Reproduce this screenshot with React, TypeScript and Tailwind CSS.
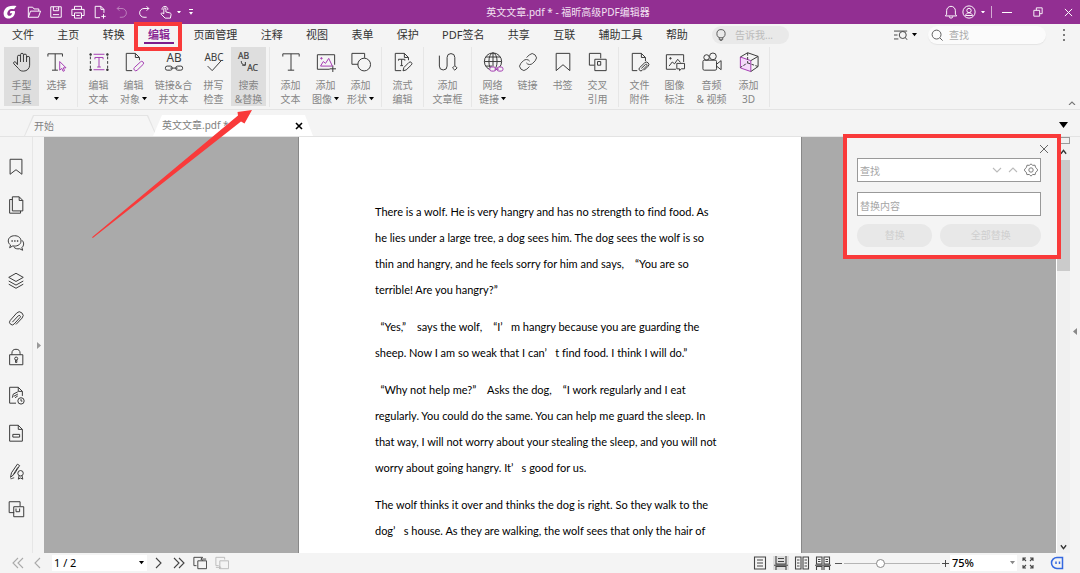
import { useState } from 'react';
import type { ReactNode } from 'react';

const menus = ['文件', '主页', '转换', '编辑', '页面管理', '注释', '视图', '表单', '保护', 'PDF签名', '共享', '互联', '辅助工具', '帮助'];

type IconProps = { children: ReactNode; className?: string; box?: string };

const Icon = ({ children, className = 'size-5', box = '0 0 22 22' }: IconProps) => (
    <svg
        viewBox={box}
        className={`${className} shrink-0`}
        fill="none"
        stroke="currentColor"
        strokeWidth="1.1"
        aria-hidden="true"
    >
        {children}
    </svg>
);

const purple = '#a63fb4';

const icons: Record<string, ReactNode> = {
    hand: (
        <path d="M6 14V5.200a1.700 1.700 0 0 1 3.400 0V11M9.400 5.200V3a1.600 1.600 0 0 1 3.200 0v8M12.600 4a1.700 1.700 0 0 1 3.400 0v7M16 6.500a1.700 1.700 0 0 1 3.400 0v8a6.500 6.500 0 0 1-6.500 6.500H12c-2.500 0-4-1.200-5-3l-5-5c-1-1.700.8-3 2.200-1.800L6 14" />
    ),
    select: (
        <>
            <path d="M1 5V2h16v3M9 2v18M5.500 20H12" />
            <path stroke={purple} d="M14 10.500V20l2.300-2 1.400 3.200 1.600-.7-1.400-3.100h3z" />
        </>
    ),
    editText: (
        <>
            <path strokeDasharray="3 2" d="M1.500 5v13M20.500 5v13" />
            <path stroke={purple} d="M5 2.500h12M5 19.500h12M6.500 8V6h9v2M11 6v10.500M9 16.500h4" />
            <path fill="currentColor" d="M1 2h1.500v1.500H1zM19.500 2H21v1.500h-1.500zM1 18.800h1.500v1.500H1zM19.500 18.800H21v1.500h-1.500z" />
        </>
    ),
    editObject: (
        <>
            <path d="M9 20.500H2.500v-19h10l4.500 4.500v3M12.500 1.500V6H17" />
            <path stroke={purple} d="m11.500 17 6.500-6a2 2 0 0 1 3 2.700l-6.500 6.300a2 2 0 0 1-3-3z" />
        </>
    ),
    linkText: (
        <>
            <text x="11" y="11.500" textAnchor="middle" fontSize="13" fill="currentColor" stroke="none">
                AB
            </text>
            <rect x="1.500" y="15.500" width="7.500" height="4.500" rx="2" />
            <rect x="13" y="15.500" width="7.500" height="4.500" rx="2" />
            <path d="M7 17.700h8" />
        </>
    ),
    spell: (
        <>
            <text x="11" y="10" textAnchor="middle" fontSize="11" fill="currentColor" stroke="none">
                ABC
            </text>
            <path d="m4 15.500 5 5L19 9.500" />
        </>
    ),
    replace: (
        <>
            <g fontSize="9.500" fill="currentColor" strokeWidth=".2">
                <text x="-1" y="7.500">AB</text>
                <text x="9" y="21">AC</text>
            </g>
            <path d="M2.500 10c0 2.800 1.500 4.500 4.500 4.500M7 11v3.500H3.500" />
        </>
    ),
    text: <path d="M2 5V2h18v3M11 2v18M7.500 20h7" />,
    image: (
        <>
            <path d="M15 19H1.500V3h19v11M18.500 15v7M15 18.500h7" />
            <path stroke={purple} d="m5 15.500 3-5 2.500 2L14 7l4 8.500z" />
            <circle cx="6" cy="7" r=".8" fill={purple} stroke={purple} />
        </>
    ),
    shape: (
        <>
            <path d="M8 13.500H1V1.500h14v5" />
            <circle cx="14.500" cy="13.800" r="7" />
        </>
    ),
    flow: (
        <>
            <path d="M9 20.500H2.500v-19h10L17 6v3M12.500 1.500V6H17M6 9.500V8h7v1.500M9.500 8v7M8 15h3" />
            <path d="m12 17 5.500-5.500a1.800 1.800 0 0 1 2.700 2.700l-5.700 5.500-3.500 1z" />
        </>
    ),
    article: <path d="M1.500 4v11.500a4.200 4.200 0 0 0 8.500 0V6a4.200 4.200 0 0 1 8.500 0v9M18.500 15l2.500 2.500-2.500 2.500-2.500-2.500z" />,
    web: (
        <>
            <circle cx="11" cy="10.500" r="9.500" />
            <ellipse cx="11" cy="10.500" rx="4.500" ry="9.500" />
            <path d="M11 1v15M1.500 10.500h19M3 5.500h16M3 15.500h7" />
            <g stroke={purple}>
                <rect x="7.500" y="16.500" width="6.500" height="4.500" rx="2" fill="#f4f4f4" />
                <rect x="15.500" y="16.500" width="6.500" height="4.500" rx="2" fill="#f4f4f4" />
                <path d="M12.500 18.800h5" />
            </g>
        </>
    ),
    link: (
        <g transform="scale(.92)">
            <path d="M10 13a5 5 0 0 0 7.540.540l3-3a5 5 0 0 0-7.070-7.070l-3.200 3.200" />
            <path d="M14 11a5 5 0 0 0-7.540-.540l-3 3a5 5 0 0 0 7.070 7.070l3.200-3.200" />
        </g>
    ),
    bookmark: <path d="M3.500 1.500h15v19L11 14l-7.500 6.500z" />,
    cross: (
        <>
            <path d="M7 14.500H1.500v-13H14V7" />
            <path d="M7.500 8h12.500v12.500H7.500zM10.500 10.500v4h3.500v-4z" />
        </>
    ),
    attach: (
        <>
            <path d="M8 20.500H2.500v-19h10L17 6v4M12.500 1.500V6H17" />
            <path d="m12.500 18 4.500-4.300a1 1 0 0 1 1.500 1.400l-5 5a2 2 0 0 1-3-2.800l5.500-5.300a2.600 2.600 0 0 1 4 3.600l-4.500 4.500" />
        </>
    ),
    imageNote: (
        <>
            <path d="M12 19H1.500V3h19v8M4.500 15.500 8 11l2.500 2L14 8l3 3.500" />
            <circle cx="6" cy="7" r=".8" fill="currentColor" />
            <path d="M13 12.500h8.500v6H18l-2 2v-2h-3z" />
        </>
    ),
    video: (
        <>
            <circle cx="5" cy="6" r="3" />
            <circle cx="12" cy="4.800" r="3.700" />
            <rect x="1" y="9" width="15" height="11" rx="1.500" />
            <path d="m16 13.500 5-4v10l-5-4" />
        </>
    ),
    cube: (
        <>
            <path fill="#f5d9fa" stroke={purple} d="M1.500 5.500 13 9.500v12L1.500 17.500z" />
            <path d="M1.500 5.500 9.500.8l11.500 4-8 4.700M21 4.800V16l-8 5.500" />
            <path strokeDasharray="3 1.500" d="M9.500 1v11L1.500 17M9.500 12 21 16" />
        </>
    ),
};

type Tool = { icon: string; label: string[]; caret?: boolean; active?: boolean; width?: string };

const groups: Tool[][] = [
    [
        { icon: 'hand', label: ['手型', '工具'], active: true },
        { icon: 'select', label: ['选择', ''], caret: true },
    ],
    [
        { icon: 'editText', label: ['编辑', '文本'] },
        { icon: 'editObject', label: ['编辑', '对象'], caret: true },
        { icon: 'linkText', label: ['链接&合', '并文本'], width: 'w-[45px]' },
        { icon: 'spell', label: ['拼写', '检查'] },
        { icon: 'replace', label: ['搜索', '&替换'], active: true },
    ],
    [
        { icon: 'text', label: ['添加', '文本'] },
        { icon: 'image', label: ['添加', '图像'], caret: true },
        { icon: 'shape', label: ['添加', '形状'], caret: true },
    ],
    [{ icon: 'flow', label: ['流式', '编辑'] }],
    [{ icon: 'article', label: ['添加', '文章框'], width: 'w-[41px]' }],
    [
        { icon: 'web', label: ['网络', '链接'], caret: true },
        { icon: 'link', label: ['链接'] },
        { icon: 'bookmark', label: ['书签'] },
        { icon: 'cross', label: ['交叉', '引用'] },
    ],
    [
        { icon: 'attach', label: ['文件', '附件'] },
        { icon: 'imageNote', label: ['图像', '标注'] },
        { icon: 'video', label: ['音频', '& 视频'], width: 'w-[39px]' },
        { icon: 'cube', label: ['添加', '3D'] },
    ],
];

const sideTools: { name: string; art: ReactNode }[] = [
    { name: '书签', art: <path d="M4.500 2.500h13v16.500l-6.500-5-6.500 5z" /> },
    {
        name: '页面',
        art: <path d="M7 2h7.500L18.500 6v11.500H7zM14.500 2v4h4M7 5H4v15h12v-2.500" />,
    },
    {
        name: '注释',
        art: (
            <>
                <path d="M9.500 3c-4.300 0-7 2.500-7 5.700 0 2 1 3.500 2.500 4.500l-1 3 3.500-2c3.500.8 9-.7 9-5.500 0-3.200-2.700-5.700-7-5.700z" />
                <path d="M17.500 8c2.500 2 2.500 6 0 8l.8 3-3.300-1.700c-2.500.5-5 0-6.500-2" />
                <path strokeDasharray="1.500 1.500" strokeWidth="1.500" d="M6 8.800h7.500" />
            </>
        ),
    },
    { name: '图层', art: <path d="m11 2.500 8 4.500-8 4.500L3 7zM3 11l8 4.500 8-4.500M3 14.500l8 4.500 8-4.500" /> },
    {
        name: '附件',
        art: <path d="m7 14.500 6.500-7a1.300 1.300 0 0 1 2 1.800l-6.500 7.200a2.900 2.900 0 0 1-4.300-4l7-8a4 4 0 0 1 6 5.500L11 17" />,
    },
    {
        name: '安全',
        art: (
            <>
                <path d="M4 8.500h14.500v11H4zM6.500 8.500V7a4.500 4.500 0 0 1 9 0v1.500" />
                <circle cx="11.200" cy="12.800" r="1.700" />
                <path d="M10.500 14.500h1.400v2.500h-1.400z" />
            </>
        ),
    },
    {
        name: '签名历史',
        art: (
            <>
                <path d="M11 20H4V2.500h9.500L18 7v5M13.500 2.500V7H18" />
                <path d="m7 14 1-4 5-2.500M8.500 12.500l4.500-2.500M10 14l3-2" />
                <circle cx="16.500" cy="17.500" r="3.500" />
                <path d="M16.500 15.500v2.200H18" />
            </>
        ),
    },
    { name: '字段', art: <path d="M4 2.500h9.500L18 7v13H4zM13.500 2.500V7H18M7.500 12.500h7.500v3H7.500z" /> },
    {
        name: '数字签名',
        art: (
            <>
                <path d="m5 18 1-5L12.500 3.500 15 5 9 14.500zM8 15l5-8M5 19.500c2 0 2.500-1 4-1" />
                <circle cx="16" cy="13.500" r="3" />
                <path d="m14.500 16-1 4 2.500-1.300 2.500 1.300-1-4" />
            </>
        ),
    },
    {
        name: '文章',
        art: <path d="M9 15H3.500V3h12v5M8.500 8.500h11v11h-11zM11 10.500v3.500h4v-3.500" />,
    },
];

const paragraphs = [
    [
        'There is a wolf. He is very hangry and has no strength to find food. As',
        'he lies under a large tree, a dog sees him. The dog sees the wolf is so',
        'thin and hangry, and he feels sorry for him and says,\u3000“You are so',
        'terrible! Are you hangry?”',
    ],
    [
        '\u2002“Yes,”\u3000says the wolf,\u3000“I’\u2003m hangry because you are guarding the',
        'sheep. Now I am so weak that I can’\u2003t find food. I think I will do.”',
    ],
    [
        '\u2002“Why not help me?”\u3000Asks the dog,\u3000“I work regularly and I eat',
        'regularly. You could do the same. You can help me guard the sleep. In',
        'that way, I will not worry about your stealing the sleep, and you will not',
        'worry about going hangry. It’\u2003s good for us.',
    ],
    [
        'The wolf thinks it over and thinks the dog is right. So they walk to the',
        'dog’\u2003s house. As they are walking, the wolf sees that only the hair of',
    ],
];

const Caret = ({ className = 'w-[5px]' }: { className?: string }) => (
    <svg viewBox="0 0 6 4" className={`${className} shrink-0`} fill="currentColor" aria-hidden="true">
        <path d="M0 0h6L3 4z" />
    </svg>
);

const TitleBar = () => (
    <header className="flex h-6 shrink-0 items-center justify-between bg-[#922f92] px-[3px] text-white">
        {/* Quick access */}
        <div className="flex flex-1 items-center gap-2">
            <svg viewBox="0 0 14 14" className="size-[14px]" fill="white" role="img" aria-label="Foxit">
                <path d="M13.500 1C8 .2 4.500 1.200 2.500 3.500-.5 7 .2 12 3.500 13.200c4 1.300 8-1.200 8.500-5.700.1-.9-.2-1.500-.8-1.500H7.500L6.800 8.200h2.400c-.6 2-2.200 3-3.700 2.500-1.700-.7-1.600-3.500 0-5.200 1.500-1.700 3.600-1.600 5.500-1.200z" />
            </svg>
            <div className="flex items-center gap-2 pl-[2px]">
                <button aria-label="打开">
                    <Icon className="size-[14px]" box="0 0 16 16">
                        <path d="M1.500 14V2.500h5l1.500 2h5.500V7M1.500 14 4 7h11.500L13 14z" />
                    </Icon>
                </button>
                <button aria-label="保存">
                    <Icon className="size-[14px]" box="0 0 16 16">
                        <path d="M2 2h12v12H2zM5 2v4.500h6V2M4.500 11h7M9 3.500V5" />
                    </Icon>
                </button>
                <button aria-label="打印">
                    <Icon className="size-[14px]" box="0 0 16 16">
                        <path d="M4 5V1.500h8V5M4 12H1V5h14v7h-3M4 9h8v6H4zM6 12h4" />
                    </Icon>
                </button>
                <button aria-label="新建">
                    <Icon className="size-[14px]" box="0 0 16 16">
                        <path d="M8 14.500H2.500v-13H9L12.500 5v4M9 1.500V5h3.500M12 10.500v5M9.500 13h5" />
                    </Icon>
                </button>
                <button aria-label="撤销" className="opacity-40">
                    <Icon className="size-[14px]" box="0 0 16 16">
                        <path d="M5 1.500 2.500 4 5 6.500M2.500 4H8a5 5 0 0 1 0 10H5.500" />
                    </Icon>
                </button>
                <button aria-label="重做">
                    <Icon className="size-[14px]" box="0 0 16 16">
                        <path d="M11 1.500 13.500 4 11 6.500M13.500 4H8a5 5 0 0 0 0 10h3" />
                    </Icon>
                </button>
                <button aria-label="手型工具" className="flex items-center gap-1">
                    <Icon className="size-[14px]" box="0 0 16 16">
                        <path d="M5.500 10V4.500a1.200 1.200 0 0 1 2.400 0V8l4.500 1c1 .3 1.600 1 1.400 2l-.8 4H7L2.500 10.500c-.6-1 .6-1.800 1.500-1.200zM3.500 5.500a3.300 3.300 0 1 1 6.500 0" />
                    </Icon>
                    <Caret className="w-1" />
                </button>
                <button aria-label="自定义" className="flex flex-col items-center gap-[2px]">
                    <span className="h-px w-1 bg-white" />
                    <Caret className="w-1" />
                </button>
            </div>
        </div>
        <h1 className="pl-[60px] text-[10px] text-[#f3e3f3]">英文文章.pdf * - 福昕高级PDF编辑器</h1>
        <div className="flex flex-1 items-center justify-end gap-1 pr-1">
            <button aria-label="通知">
                <Icon className="size-[14px]" box="0 0 16 16">
                    <path d="M1.500 12.500h13L13 10.500V6.500a5 5 0 0 0-10 0v4zM6 13a2 2 0 0 0 4 0" />
                </Icon>
            </button>
            <button aria-label="账户" className="flex items-center gap-[5px]">
                <Icon className="size-[14px]" box="0 0 16 16">
                    <circle cx="8" cy="8" r="7" />
                    <circle cx="8" cy="6.300" r="2.500" />
                    <path d="M4 12c.5-2 2-3 4-3s3.500 1 4 3z" />
                </Icon>
                <Caret className="w-1" />
            </button>
            <span className="ml-[2px] h-3 w-px bg-white/60" />
            <div className="ml-[6px] flex items-center gap-[21px]">
                <button aria-label="最小化" className="h-px w-[10px] bg-white" />
                <button aria-label="还原">
                    <Icon className="size-[10px]" box="0 0 12 12">
                        <path d="M1 4h7v7H1zM4 4V1h7v7H8" />
                    </Icon>
                </button>
                <button aria-label="关闭">
                    <Icon className="size-[9px]" box="0 0 10 10">
                        <path d="m1 1 8 8M9 1 1 9" />
                    </Icon>
                </button>
            </div>
        </div>
    </header>
);

const MenuBar = ({ active, onPick }: { active: string; onPick: (name: string) => void }) => (
    <div className="flex h-[22px] shrink-0 items-center">
        <nav className="flex w-full max-w-[688px] items-center justify-between pl-3 text-[11px] text-[#333]">
            {menus.map((name) => (
                <button
                    key={name}
                    onClick={() => onPick(name)}
                    className={`relative h-[22px] whitespace-nowrap ${name === active ? 'font-bold text-[#8a2a96]' : ''}`}
                >
                    {name}
                    {name === active && (
                        <>
                            <span className="absolute -inset-x-1 bottom-[2px] h-[2px] bg-[#7b1c8c]" />
                            {/* Highlight frame */}
                            <span className="pointer-events-none absolute -top-[2px] -right-3 -left-[14px] z-20 h-[29px] border-4 border-[#f93a3a]" />
                        </>
                    )}
                </button>
            ))}
        </nav>
        <label className="ml-6 flex h-[18px] w-[77px] shrink-0 items-center gap-1 rounded-full bg-[#e9e9e9] pl-[3px]">
            <Icon className="size-3 text-[#555]" box="0 0 14 14">
                <circle cx="7" cy="5.500" r="4.800" />
                <path d="M5 10v2.500h4V10M6 13.500h2" />
            </Icon>
            <input aria-label="告诉我" placeholder="告诉我..." className="w-full min-w-0 bg-transparent pl-1 text-[10px] outline-none placeholder:text-[#bbb]" />
        </label>
        <div className="ml-auto flex items-center">
            <button aria-label="高级搜索" className="flex items-center gap-1 text-[#444]">
                <Icon className="h-3 w-[14px]" box="0 0 16 13">
                    <path d="M0 2h15M0 6.500h4M0 11h5" />
                    <circle cx="10" cy="6.500" r="4" />
                    <path d="m13 9.500 2 2.500" />
                </Icon>
                <Caret className="w-[5px] text-black" />
            </button>
            <label className="ml-[11px] flex h-[18px] w-[118px] items-center rounded-full bg-[#fbfbfb] pl-[3px] shadow-[0_1px_1px_#e4e4e4]">
                <Icon className="size-3 text-[#555]" box="0 0 14 14">
                    <circle cx="6.500" cy="6.500" r="5.200" />
                    <path d="m10.500 10.500 3 3" />
                </Icon>
                <input aria-label="查找" placeholder="查找" className="w-full min-w-0 bg-transparent pl-[6px] text-[10px] outline-none placeholder:text-[#aaa]" />
            </label>
            <button aria-label="更多" className="mr-[15px] ml-[17px] flex flex-col gap-[3px]">
                <span className="size-[2px] rounded-full bg-[#555]" />
                <span className="size-[2px] rounded-full bg-[#555]" />
                <span className="size-[2px] rounded-full bg-[#555]" />
            </button>
        </div>
    </div>
);

const Ribbon = () => (
    <div className="flex h-16 shrink-0 items-start border-b border-[#e3e3e3] pt-px pl-1">
        {groups.map((tools, i) => (
            <div key={i} className="flex">
                {tools.map((tool) => (
                    <button
                        key={tool.icon}
                        className={`flex h-[59px] flex-col items-center pt-[5px] text-[10px] leading-[14px] whitespace-nowrap text-[#858585] ${tool.width ?? 'w-[35px]'} ${tool.active ? 'bg-[#dedede]' : ''}`}
                    >
                        <Icon className="mb-[6px] size-5 overflow-visible text-[#3c3c3c]">{icons[tool.icon]}</Icon>
                        <span>{tool.label[0]}</span>
                        <span className="flex h-[14px] items-center gap-[2px]">
                            {tool.label[1]}
                            {tool.caret && <Caret className="w-[5px] text-black" />}
                        </span>
                    </button>
                ))}
                <span className="mx-[3px] h-[60px] w-px bg-[#e6e6e6]" />
            </div>
        ))}
        <button aria-label="折叠功能区" className="mt-auto mr-1 mb-1 ml-auto text-[#777]">
            <Icon className="h-1 w-2" box="0 0 8 4">
                <path d="m1 4 3-3 3 3" />
            </Icon>
        </button>
    </div>
);

const DocTabs = () => (
    <div className="flex h-[26px] shrink-0 items-end pl-6 text-[10px] text-[#808080]">
        <button className="h-[21px] w-[133px] bg-[#e4e4e4] [clip-path:polygon(9px_0,124px_0,100%_100%,0_100%)]">
            <span className="m-px flex h-5 items-center bg-[#f6f6f6] pl-[9px] [clip-path:polygon(9px_0,122px_0,100%_100%,0_100%)]">
                开始
            </span>
        </button>
        <div className="-ml-1 flex h-[21px] w-[160px] items-center justify-between bg-white pr-[10px] pl-[9px] [clip-path:polygon(9px_0,152px_0,100%_100%,0_100%)]">
            <button>英文文章.pdf *</button>
            <button aria-label="关闭标签" className="text-black">
                <Icon className="size-2" box="0 0 8 8">
                    <path strokeWidth="1.600" d="m1 1 6 6M7 1 1 7" />
                </Icon>
            </button>
        </div>
        <button aria-label="标签列表" className="mr-3 mb-2 ml-auto text-black">
            <Caret className="w-[9px]" />
        </button>
    </div>
);

const SearchPanel = () => (
    <section
        aria-label="搜索与替换"
        className="absolute -top-[3px] right-[19px] z-10 w-[218px] border-4 border-[#f93a3a] bg-[#f4f4f4] pt-[6px] pr-4 pb-2 pl-[10px]"
    >
        <div className="-mr-[8px] flex justify-end">
            <button aria-label="关闭" className="text-[#666]">
                <Icon className="size-[10px]" box="0 0 10 10">
                    <path strokeWidth="1" d="m1 1 8 8M9 1 1 9" />
                </Icon>
            </button>
        </div>
        <div className="mt-1 flex h-6 items-center gap-[6px] border border-[#999] bg-white pr-[2px]">
            <input aria-label="查找" placeholder="查找" className="w-full min-w-0 pt-[3px] pl-[2px] text-[10px] outline-none placeholder:text-[#a5a5a5]" />
            <button aria-label="下一个" className="text-[#bbb]">
                <Icon className="h-[6px] w-[10px]" box="0 0 10 6"><path d="m1 1 4 4 4-4" /></Icon>
            </button>
            <button aria-label="上一个" className="text-[#bbb]">
                <Icon className="h-[6px] w-[10px]" box="0 0 10 6"><path d="m1 5 4-4 4 4" /></Icon>
            </button>
            <button aria-label="设置" className="text-[#777]">
                <Icon className="size-[14px]" box="0 0 16 16">
                    <path d="m8 1 2 1.700 2.600-.2.600 2.600L15.300 7v2l-2 1.700-.6 2.600-2.700-.2L8 15l-2-1.900-2.700.2-.6-2.600L.7 9V7l2.100-1.900.6-2.600 2.600.2z" />
                    <circle cx="8" cy="8" r="2.500" />
                </Icon>
            </button>
        </div>
        <input
            aria-label="替换内容"
            placeholder="替换内容"
            className="mt-[10px] block h-6 w-full border border-[#999] bg-white pt-[3px] pl-[2px] text-[10px] outline-none placeholder:text-[#a5a5a5]"
        />
        <div className="mt-2 flex gap-2 text-[10px] text-[#cfcfcf]">
            <button className="h-[23px] flex-3 rounded-full bg-[#e8e8e8]">替换</button>
            <button className="h-[23px] flex-4 rounded-full bg-[#e8e8e8]">全部替换</button>
        </div>
    </section>
);

const StatusBar = () => {
    const [zoom, setZoom] = useState(37);

    return (
        <footer className="flex h-5 shrink-0 items-center pr-4 pl-3 text-[11px] text-[#444]">
            <div className="flex items-center gap-2">
                <button aria-label="首页" className="text-[#aaa]">
                    <Icon className="size-3" box="0 0 12 12"><path d="M6 1 1 6l5 5M11 1 6 6l5 5" /></Icon>
                </button>
                <button aria-label="上一页" className="text-[#aaa]">
                    <Icon className="size-3" box="0 0 12 12"><path d="M8 1 3 6l5 5" /></Icon>
                </button>
                <select aria-label="页码" className="h-4 w-[95px] appearance-none bg-white pl-[2px] font-[Noto_Sans] text-[11px] leading-4 text-black">
                    <option>1 / 2</option>
                </select>
                <Caret className="-ml-4 w-[5px] text-black" />
                <button aria-label="下一页">
                    <Icon className="size-3" box="0 0 12 12"><path d="m4 1 5 5-5 5" /></Icon>
                </button>
                <button aria-label="末页" className="pl-px">
                    <Icon className="size-3" box="0 0 12 12"><path d="m1 1 5 5-5 5M6 1l5 5-5 5" /></Icon>
                </button>
                <button aria-label="上一视图">
                    <Icon className="size-[14px]" box="0 0 16 16"><path d="M4 11H1V1.500h10M5.500 5.500h10v9h-10zM15 3.500H9M11 1.500l-2 2 2 2" /></Icon>
                </button>
                <button aria-label="下一视图" className="text-[#bbb]">
                    <Icon className="size-[14px]" box="0 0 16 16"><path d="M4 11H1V1.500h10V4M5.500 5.500h10v9h-10zM1 13h5M4.500 11l2 2-2 2" /></Icon>
                </button>
            </div>
            <div className="ml-auto flex items-center gap-[5px]">
                <button aria-label="单页">
                    <Icon className="h-[14px] w-4" box="0 0 16 14"><path d="M2.500 1h11v12h-11zM5 4h6M5 7h6M5 10h6" /></Icon>
                </button>
                <button aria-label="连续" className="bg-[#dedede]">
                    <Icon className="h-[14px] w-4" box="0 0 16 14"><path d="M3 0v8h10V0M5 2.500h6M5 5.500h6M3 14v-3.500h10V14M1 9.200h14" /></Icon>
                </button>
                <button aria-label="双页">
                    <Icon className="h-[14px] w-4" box="0 0 16 14"><path d="M1.500 1H7v12H1.500zM9 1h5.500v12H9zM3 4h2.500M3 7h2.500M3 10h2.500M10.500 4H13M10.500 7H13M10.500 10H13" /></Icon>
                </button>
                <button aria-label="双页连续">
                    <Icon className="h-[14px] w-4" box="0 0 16 14"><path d="M1.500 8V1H7v7zM9 8V1h5.500v7zM1.500 14v-3.500H7V14M9 14v-3.500h5.500V14M3 3.500h2.500M3 5.500h2.500M10.500 3.500H13M10.500 5.500H13M0 9.200h16" /></Icon>
                </button>
            </div>
            <button aria-label="缩小" className="ml-1 h-px w-[7px] bg-[#555]" />
            <input
                type="range"
                aria-label="缩放"
                value={zoom}
                onChange={(e) => setZoom(Number(e.target.value))}
                className="mx-[2px] h-3 w-[96px] appearance-none bg-[linear-gradient(#b5b5b5,#b5b5b5)] bg-[length:100%_1px] bg-center bg-no-repeat [&::-webkit-slider-thumb]:size-[9px] [&::-webkit-slider-thumb]:appearance-none [&::-webkit-slider-thumb]:rounded-full [&::-webkit-slider-thumb]:border [&::-webkit-slider-thumb]:border-[#888] [&::-webkit-slider-thumb]:bg-white"
            />
            <button aria-label="放大">
                <Icon className="size-[7px]" box="0 0 8 8"><path d="M4 0v8M0 4h8" /></Icon>
            </button>
            <select aria-label="缩放比例" className="ml-px h-4 w-[67px] appearance-none bg-white pl-[2px] font-[Noto_Sans] text-[11px] leading-4 font-medium text-black">
                <option>75%</option>
            </select>
            <Caret className="-ml-[7px] w-[5px] text-[#888]" />
            <button aria-label="全屏" className="ml-[7px]">
                <Icon className="size-3" box="0 0 12 12">
                    <path d="M1 4V1h3M1 1l3 3M8 1h3v3M11 1 8 4M1 8v3h3M1 11l3-3M11 8v3H8M11 11 8 8" />
                </Icon>
            </button>
            <button aria-label="助手" className="ml-4 text-[#3569e0]">
                <Icon className="size-[14px]" box="0 0 14 14">
                    <path strokeWidth="1.500" d="M12.500 12.500H7A5.500 5.500 0 0 1 7 1.500h5.500z" />
                    <path strokeWidth="1.500" d="M6 5.500V8M9.500 5.500V8" />
                </Icon>
            </button>
        </footer>
    );
};

const App = () => {
    const [menu, setMenu] = useState('编辑');

    return (
        <div className="relative flex h-screen flex-col overflow-hidden bg-[#f4f4f4] font-['Noto_Sans','Noto_Sans_CJK_SC',sans-serif]">
            <TitleBar />
            <MenuBar active={menu} onPick={setMenu} />
            <Ribbon />
            <DocTabs />

            <main className="relative flex min-h-0 flex-1 border-t border-[#e3e3e3]">
                {/* Navigation panel */}
                <aside className="flex w-[33px] shrink-0 flex-col items-center gap-[18px] border-r border-[#e6e6e6] pt-5 text-[#3c3c3c]">
                    {sideTools.map((tool) => (
                        <button key={tool.name} aria-label={tool.name}>
                            <Icon className="size-5">{tool.art}</Icon>
                        </button>
                    ))}
                </aside>
                <button aria-label="展开面板" className="flex w-[11px] shrink-0 items-center justify-center text-[#999]">
                    <svg viewBox="0 0 4 7" className="h-[7px] w-1" fill="currentColor"><path d="M0 0v7l4-3.500z" /></svg>
                </button>

                {/* Document */}
                <div className="flex-1 overflow-hidden bg-[#aaa]">
                    <article className="mx-auto min-h-full w-[504px] border-x border-[#888] bg-white px-[76px] pt-[62px] font-['Lato','Noto_Sans_CJK_SC',sans-serif] text-[11px] leading-[26px] text-black [font-variant-ligatures:none]">
                        {paragraphs.map((lines, i) => (
                            <p key={i} className="mb-[11px] whitespace-pre">
                                {lines.join('\n')}
                            </p>
                        ))}
                    </article>
                </div>

                {/* Scrollbar */}
                <div className="flex w-[14px] shrink-0 flex-col items-center border-l border-white bg-[#f0f0f0] text-[#333]">
                    <span className="h-[7px] w-full border border-[#999]" />
                    <Icon className="my-[5px] h-[6px] w-[7px]" box="0 0 8 6"><path strokeWidth="1.500" d="m1 5 3-4 3 4" /></Icon>
                    <span className="h-[111px] w-full bg-[#cbcbcb]" />
                    <Icon className="mt-auto mb-[3px] h-[6px] w-[7px]" box="0 0 8 6"><path strokeWidth="1.500" d="m1 1 3 4 3-4" /></Icon>
                </div>
                <button aria-label="展开右侧面板" className="flex w-[10px] shrink-0 items-center justify-center pb-7 text-[#888]">
                    <svg viewBox="0 0 4 7" className="h-[7px] w-1" fill="currentColor"><path d="M4 0v7L0 3.500z" /></svg>
                </button>

                <SearchPanel />
            </main>

            <StatusBar />

            {/* Pointer arrow */}
            <svg viewBox="0 0 160 128" className="pointer-events-none absolute top-[110px] left-[92px] z-20 h-[128px] w-[160px]" fill="#f93a3a" aria-hidden="true">
                <path d="M0 127.200 146 5.500l-.5-3.500L160 0l-7.500 13.500-3.500-2L.8 128z" />
            </svg>
        </div>
    );
};

export default App;
